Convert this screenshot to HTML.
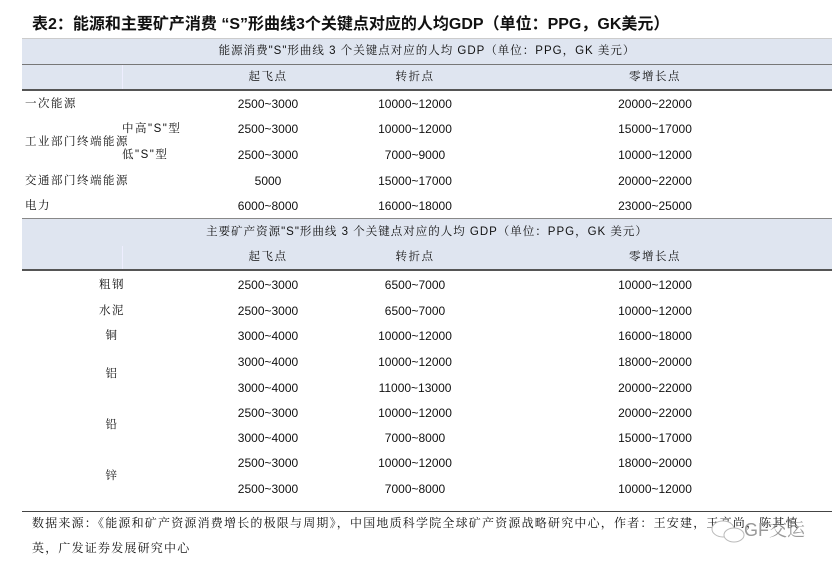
<!DOCTYPE html>
<html><head><meta charset="utf-8"><style>
body{margin:0;width:835px;height:567px;background:#fff;position:relative;overflow:hidden;font-family:"Liberation Sans","Noto Serif CJK SC",sans-serif;color:#111}
.a{position:absolute;white-space:nowrap;line-height:14px;font-size:12px}
.c{transform:translateX(-50%)}
.s{font-family:"Liberation Sans","Noto Serif CJK SC",serif;font-size:11.5px;letter-spacing:1.5px}
.bg{position:absolute;left:22px;width:810px;background:#dfe5f0}
.ln{position:absolute;left:22px;width:810px}
</style></head><body>
<div class="a" style="left:32px;top:15px;font-size:16px;line-height:20px;font-weight:bold;font-family:'Liberation Sans','Noto Sans CJK SC',sans-serif">表2：能源和主要矿产消费 “S”形曲线3个关键点对应的人均GDP（单位：PPG，GK美元）</div>
<div class="bg" style="top:38px;height:52px"></div>
<div class="ln" style="top:38px;height:1px;background:#ccc"></div>
<div class="ln" style="top:64px;height:1px;background:#777"></div>
<div class="ln" style="top:89px;height:2px;background:#555"></div>
<div style="position:absolute;left:122px;top:65px;width:1px;height:24px;background:#eef"></div>
<div class="a c s" style="left:427px;top:44px;letter-spacing:1px">能源消费"S"形曲线 3 个关键点对应的人均 GDP（单位：PPG，GK 美元）</div>
<div class="a c s" style="left:268px;top:70px">起飞点</div>
<div class="a c s" style="left:415px;top:70px">转折点</div>
<div class="a c s" style="left:655px;top:70px">零增长点</div>

<div class="a s" style="left:25px;top:97px">一次能源</div>
<div class="a s" style="left:122px;top:122px">中高"S"型</div>
<div class="a s" style="left:25px;top:135px">工业部门终端能源</div>
<div class="a s" style="left:122px;top:148px">低"S"型</div>
<div class="a s" style="left:25px;top:174px">交通部门终端能源</div>
<div class="a s" style="left:25px;top:199px">电力</div>

<div class="a c" style="left:268px;top:97px">2500~3000</div><div class="a c" style="left:415px;top:97px">10000~12000</div><div class="a c" style="left:655px;top:97px">20000~22000</div>
<div class="a c" style="left:268px;top:122px">2500~3000</div><div class="a c" style="left:415px;top:122px">10000~12000</div><div class="a c" style="left:655px;top:122px">15000~17000</div>
<div class="a c" style="left:268px;top:148px">2500~3000</div><div class="a c" style="left:415px;top:148px">7000~9000</div><div class="a c" style="left:655px;top:148px">10000~12000</div>
<div class="a c" style="left:268px;top:174px">5000</div><div class="a c" style="left:415px;top:174px">15000~17000</div><div class="a c" style="left:655px;top:174px">20000~22000</div>
<div class="a c" style="left:268px;top:199px">6000~8000</div><div class="a c" style="left:415px;top:199px">16000~18000</div><div class="a c" style="left:655px;top:199px">23000~25000</div>

<div class="bg" style="top:219px;height:51px"></div>
<div class="ln" style="top:218px;height:1px;background:#888"></div>
<div class="ln" style="top:269px;height:2px;background:#555"></div>
<div style="position:absolute;left:122px;top:246px;width:1px;height:23px;background:#eef"></div>
<div class="a c s" style="left:427px;top:225px;letter-spacing:1px">主要矿产资源"S"形曲线 3 个关键点对应的人均 GDP（单位：PPG，GK 美元）</div>
<div class="a c s" style="left:268px;top:250px">起飞点</div>
<div class="a c s" style="left:415px;top:250px">转折点</div>
<div class="a c s" style="left:655px;top:250px">零增长点</div>

<div class="a c s" style="left:112px;top:278px">粗钢</div>
<div class="a c s" style="left:112px;top:304px">水泥</div>
<div class="a c s" style="left:112px;top:329px">铜</div>
<div class="a c s" style="left:112px;top:367px">铝</div>
<div class="a c s" style="left:112px;top:418px">铅</div>
<div class="a c s" style="left:112px;top:469px">锌</div>

<div class="a c" style="left:268px;top:278px">2500~3000</div><div class="a c" style="left:415px;top:278px">6500~7000</div><div class="a c" style="left:655px;top:278px">10000~12000</div>
<div class="a c" style="left:268px;top:304px">2500~3000</div><div class="a c" style="left:415px;top:304px">6500~7000</div><div class="a c" style="left:655px;top:304px">10000~12000</div>
<div class="a c" style="left:268px;top:329px">3000~4000</div><div class="a c" style="left:415px;top:329px">10000~12000</div><div class="a c" style="left:655px;top:329px">16000~18000</div>
<div class="a c" style="left:268px;top:355px">3000~4000</div><div class="a c" style="left:415px;top:355px">10000~12000</div><div class="a c" style="left:655px;top:355px">18000~20000</div>
<div class="a c" style="left:268px;top:381px">3000~4000</div><div class="a c" style="left:415px;top:381px">11000~13000</div><div class="a c" style="left:655px;top:381px">20000~22000</div>
<div class="a c" style="left:268px;top:406px">2500~3000</div><div class="a c" style="left:415px;top:406px">10000~12000</div><div class="a c" style="left:655px;top:406px">20000~22000</div>
<div class="a c" style="left:268px;top:431px">3000~4000</div><div class="a c" style="left:415px;top:431px">7000~8000</div><div class="a c" style="left:655px;top:431px">15000~17000</div>
<div class="a c" style="left:268px;top:456px">2500~3000</div><div class="a c" style="left:415px;top:456px">10000~12000</div><div class="a c" style="left:655px;top:456px">18000~20000</div>
<div class="a c" style="left:268px;top:482px">2500~3000</div><div class="a c" style="left:415px;top:482px">7000~8000</div><div class="a c" style="left:655px;top:482px">10000~12000</div>

<div class="ln" style="top:511px;height:1px;background:#444"></div>
<div class="a s" style="left:32px;top:516px;font-size:12px;letter-spacing:1.2px">数据来源：《能源和矿产资源消费增长的极限与周期》，中国地质科学院全球矿产资源战略研究中心，作者：王安建，王高尚，陈其慎</div>
<div class="a s" style="left:32px;top:541px;font-size:12px;letter-spacing:1.2px">英，广发证券发展研究中心</div>
<svg style="position:absolute;left:708px;top:517px" width="40" height="30"><ellipse cx="15" cy="12" rx="11" ry="8" fill="#fff" stroke="#bbb"/><ellipse cx="26" cy="18" rx="10" ry="7" fill="#fff" stroke="#bbb"/></svg>
<div class="a" style="left:744px;top:519px;font-size:18px;line-height:22px;color:#999">GF交运</div>
</body></html>
